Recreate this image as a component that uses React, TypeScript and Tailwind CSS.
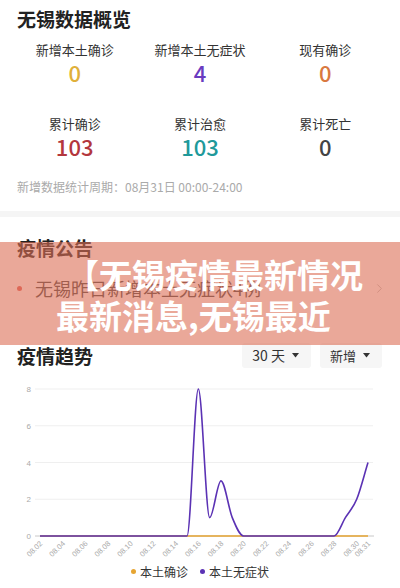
import React from "react";
import { ChevronRight } from "lucide-react";

const FONT = { fontFamily: '"Noto Sans CJK SC", "Noto Sans", sans-serif' };

const stats = [
  { label: "新增本土确诊", value: "0", color: "text-[#e0b03a]" },
  { label: "新增本土无症状", value: "4", color: "text-[#6a3bc0]" },
  { label: "现有确诊", value: "0", color: "text-[#d9793f]" },
  { label: "累计确诊", value: "103", color: "text-[#b3373d]" },
  { label: "累计治愈", value: "103", color: "text-[#20999a]" },
  { label: "累计死亡", value: "0", color: "text-[#444444]" },
];

const days = Array.from({ length: 30 }, (_, i) => `08.${String(i + 2).padStart(2, "0")}`);
const asym = [0, 0, 0, 0, 0, 0, 0, 0, 0, 0, 0, 0, 0, 0, 8, 1, 3, 1, 0, 0, 0, 0, 0, 0, 0, 0, 0, 1, 2, 4];

const xv = (i: number) => 40 + (i * 328) / 29;
const yv = (v: number) => 158 - v * 18.375;

// monotone cubic, no overshoot
function monotonePath(vals: number[]) {
  const pts = vals.map((v, i) => [xv(i), yv(v)]);
  const n = pts.length;
  const d: number[] = [];
  for (let i = 0; i < n - 1; i++) d.push((pts[i + 1][1] - pts[i][1]) / (pts[i + 1][0] - pts[i][0]));
  const m: number[] = [];
  for (let i = 0; i < n; i++) {
    if (i === 0) m.push(d[0]);
    else if (i === n - 1) m.push(d[n - 2]);
    else if (d[i - 1] * d[i] <= 0) m.push(0);
    else m.push((d[i - 1] + d[i]) / 2);
  }
  for (let i = 0; i < n - 1; i++) {
    if (d[i] === 0) {
      m[i] = 0;
      m[i + 1] = 0;
      continue;
    }
    const a = m[i] / d[i];
    const b = m[i + 1] / d[i];
    const s = a * a + b * b;
    if (s > 9) {
      const t = 3 / Math.sqrt(s);
      m[i] = t * a * d[i];
      m[i + 1] = t * b * d[i];
    }
  }
  let p = `M${pts[0][0]},${pts[0][1]}`;
  for (let i = 0; i < n - 1; i++) {
    const h = (pts[i + 1][0] - pts[i][0]) / 3;
    p += ` C${pts[i][0] + h},${pts[i][1] + m[i] * h} ${pts[i + 1][0] - h},${pts[i + 1][1] - m[i + 1] * h} ${pts[i + 1][0]},${pts[i + 1][1]}`;
  }
  return p;
}

function Caret() {
  return (
    <svg width="7" height="5" viewBox="0 0 7 5">
      <path d="M0 0 L7 0 L3.5 4.5 Z" fill="#333" />
    </svg>
  );
}

function Chart() {
  const labelIdx = [0, 2, 4, 6, 8, 10, 12, 14, 16, 18, 20, 22, 24, 26, 28, 29];
  return (
    <svg width="400" height="185" viewBox="0 0 400 185" className="block">
      {[8, 6, 4, 2].map((v) => (
        <line key={v} x1="35" x2="373" y1={yv(v)} y2={yv(v)} stroke="#efefef" strokeWidth="1" />
      ))}
      <line x1="35" x2="374" y1={yv(0)} y2={yv(0)} stroke="#c8c8c8" strokeWidth="1" />
      {[8, 6, 4, 2, 0].map((v) => (
        <text key={v} x="31" y={yv(v) + 3} textAnchor="end" fontSize="8" fill="#aaa" fontFamily="Liberation Sans, sans-serif">
          {v}
        </text>
      ))}
      {labelIdx.map((i) => (
        <text
          key={i}
          x={xv(i) + 3}
          y={166}
          textAnchor="end"
          fontSize="7.5"
          fill="#aaa"
          fontFamily="Liberation Sans, sans-serif"
          transform={`rotate(-45 ${xv(i) + 3} 166)`}
        >
          {days[i]}
        </text>
      ))}
      <line x1={xv(0)} x2={xv(29)} y1={yv(0)} y2={yv(0)} stroke="#e6a532" strokeWidth="1.6" />
      <path d={monotonePath(asym)} fill="none" stroke="#5b32b4" strokeWidth="1.6" />
    </svg>
  );
}

export default function App() {
  return (
    <div className="relative w-[400px] h-[588px] bg-white overflow-hidden text-[#222]" style={FONT}>
      <div className="px-[17px] pt-[7px]">
        <div className="text-[19px] leading-[24px] font-bold">无锡数据概览</div>
      </div>
      <div className="grid grid-cols-3 px-[12px] mt-[10px] gap-y-[30px]">
        {stats.map((s) => (
          <div key={s.label} className="flex flex-col items-center">
            <div className="text-[13px] leading-[18px] text-[#333]">{s.label}</div>
            <div className={`text-[22px] leading-[26px] font-medium ${s.color}`}>{s.value}</div>
          </div>
        ))}
      </div>
      <div className="px-[17px] mt-[19px] text-[12px] leading-[18px] text-[#aaa]">
        新增数据统计周期：08月31日 00:00-24:00
      </div>
      <div className="mt-[15px] h-[6px] bg-[#f5f5f5]" />
      <div className="px-[17px] mt-[19px] text-[19px] leading-[24px] font-bold">疫情公告</div>
      <div className="flex items-center mt-[16px] pl-[17px] pr-[13px] h-[24px]">
        <span className="w-[5px] h-[5px] rounded-full bg-[#e0605a]" />
        <span className="ml-[13px] text-[18px] leading-[24px] text-[#444] flex-1">无锡昨日新增本土无症状4例</span>
        <ChevronRight size={15} color="#bbb" strokeWidth={1.5} />
      </div>
      <div className="flex items-center justify-between mt-[43px] pl-[17px] pr-[18px] h-[25px]">
        <div className="text-[19px] leading-[24px] font-bold">疫情趋势</div>
        <div className="flex gap-[9px]">
          <div className="flex items-center gap-[7px] h-[25px] pl-[10px] pr-[12px] bg-[#f6f6f6] rounded-[3px] text-[14px] text-[#333]">
            <span>30 天</span>
            <Caret />
          </div>
          <div className="flex items-center gap-[7px] h-[25px] pl-[10px] pr-[12px] bg-[#f6f6f6] rounded-[3px] text-[13px] text-[#333]">
            <span>新增</span>
            <Caret />
          </div>
        </div>
      </div>
      <div className="mt-[10px]">
        <Chart />
      </div>
      <div className="flex items-center justify-center gap-[4px] text-[12px] leading-[17px] text-[#333]">
        <span className="w-[5px] h-[5px] rounded-full bg-[#e6a532]" />
        <span>本土确诊</span>
        <span className="ml-[8px] w-[5px] h-[5px] rounded-full bg-[#5b32b4]" />
        <span>本土无症状</span>
      </div>

      <div className="absolute left-0 top-[242px] w-full h-[103px] bg-[rgba(220,110,85,0.6)] pl-[56px] pt-[12px]">
        <div className="text-white font-bold text-[33px] leading-[41px]">
          <div className="ml-[10px]">【无锡疫情最新情况</div>
          <div>最新消息,无锡最近</div>
        </div>
      </div>
    </div>
  );
}
